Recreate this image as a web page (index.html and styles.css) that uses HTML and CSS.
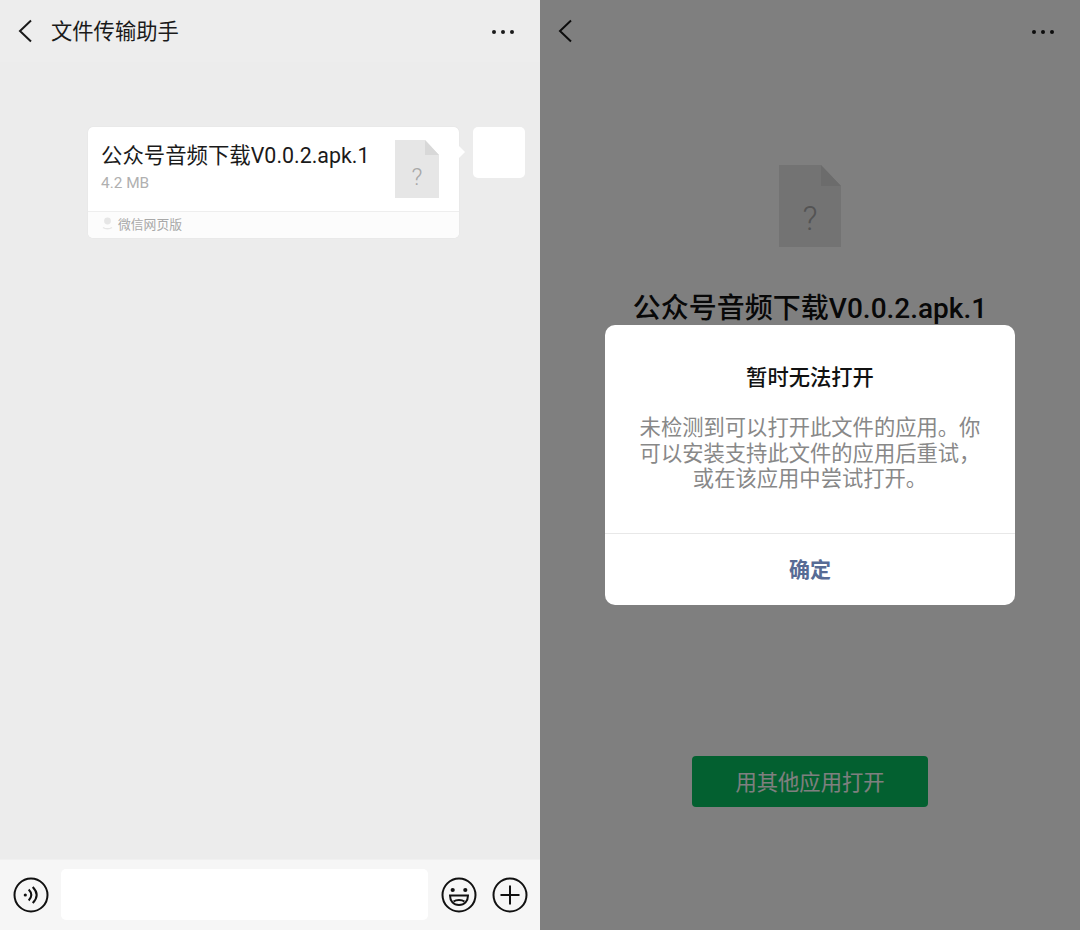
FILE: index.html
```html
<!DOCTYPE html>
<html lang="zh-CN">
  <head>
    <meta charset="UTF-8" />
    <title>文件传输助手</title>
    <link rel="stylesheet" href="styles.css">
  </head>
  <body>
    <div class="screens">
      <!-- Chat screen -->
      <section class="screen chat-screen">
        <header class="top-bar">
          <svg class="back-icon" width="14" height="24" viewBox="0 0 14 24"><path d="M13 1.5 2 12l11 10.5" /></svg>
          <h1 class="chat-title">文件传输助手</h1>
          <svg class="more-icon" width="24" height="6" viewBox="0 0 24 6"><circle cx="3" cy="3" r="2" /><circle cx="12" cy="3" r="2" /><circle cx="21" cy="3" r="2" /></svg>
        </header>

        <main class="messages">
          <div class="bubble">
            <div class="bubble-body">
              <div class="bubble-text">
                <div class="file-name">公众号音频下载V0.0.2.apk.1</div>
                <div class="file-size">4.2 MB</div>
              </div>
              <div class="file-icon file-icon-small"><span>?</span></div>
            </div>
            <div class="bubble-footer">
              <svg width="11" height="13" viewBox="0 0 11 13"><circle cx="5.5" cy="4" r="3.4" fill="#e6e6e6" /><path d="M1 10.5c2.5 1.8 6.5 1.8 9 0" fill="none" stroke="#e6e6e6" stroke-width="1.5" /></svg>
              <span>微信网页版</span>
            </div>
          </div>
          <div class="avatar"></div>
        </main>

        <footer class="input-bar">
          <svg class="round-icon" width="36" height="36" viewBox="0 0 36 36">
            <circle cx="18" cy="18" r="16.5" />
            <circle cx="12.3" cy="18" r="1.6" class="solid" />
            <path d="M15.7 12.5q5.2 5.5 0 11" />
            <path d="M19.7 10q8 8 0 16" />
          </svg>
          <div class="text-box"></div>
          <svg class="round-icon" width="36" height="36" viewBox="0 0 36 36">
            <circle cx="18" cy="18" r="16.5" />
            <circle cx="11.7" cy="13" r="2.1" class="solid" />
            <circle cx="24.3" cy="13" r="2.1" class="solid" />
            <path d="M9 18.500h18c0 5.500-3.500 9.500-9 9.500s-9-4-9-9.500z" />
            <path d="M12.500 24.500c3-2 8-2 11 0" />
          </svg>
          <svg class="round-icon" width="36" height="36" viewBox="0 0 36 36">
            <circle cx="18" cy="18" r="16.5" />
            <path d="M18 8.500v19M8.500 18h19" />
          </svg>
        </footer>
      </section>

      <!-- File screen with dialog on top -->
      <section class="screen file-screen">
        <header class="top-bar">
          <svg class="back-icon" width="14" height="24" viewBox="0 0 14 24"><path d="M13 1.5 2 12l11 10.5" /></svg>
          <svg class="more-icon" width="24" height="6" viewBox="0 0 24 6"><circle cx="3" cy="3" r="2" /><circle cx="12" cy="3" r="2" /><circle cx="21" cy="3" r="2" /></svg>
        </header>

        <div class="file-preview">
          <div class="file-icon file-icon-large"><span>?</span></div>
          <h2 class="preview-name">公众号音频下载V0.0.2.apk.1</h2>
          <button class="open-button" type="button">用其他应用打开</button>
        </div>

        <div class="overlay">
          <div class="dialog">
            <div class="dialog-content">
              <h3 class="dialog-title">暂时无法打开</h3>
              <p class="dialog-text">未检测到可以打开此文件的应用。你可以安装支持此文件的应用后重试，或在该应用中尝试打开。</p>
            </div>
            <button class="dialog-button" type="button">确定</button>
          </div>
        </div>
      </section>
    </div>
  </body>
</html>
```

FILE: styles.css
```css
* {
  box-sizing: border-box;
}

body {
  margin: 0;
  font-family: Roboto, "Noto Sans CJK SC", sans-serif;
  color: #1a1a1a;
}

h1,
h2,
h3,
p {
  margin: 0;
}

.screens {
  display: flex;
  width: 1080px;
  height: 930px;
  overflow: hidden;
}

.screen {
  position: relative;
  display: flex;
  flex-direction: column;
  width: 540px;
  height: 930px;
}

/* Top bar */
.top-bar {
  display: flex;
  align-items: center;
  flex: none;
  height: 62px;
  padding: 0 25px 0 18px;
}

.back-icon {
  flex: none;
  fill: none;
  stroke: #1a1a1a;
  stroke-width: 2;
}

.more-icon {
  flex: none;
  margin-left: auto;
  margin-top: 2px;
  fill: #1a1a1a;
}

.chat-title {
  margin: 2px 0 0 19px;
  font-size: 21.3px;
  font-weight: 400;
  line-height: 30px;
}

/* Chat */
.chat-screen {
  background-color: #ececec;
}

.chat-screen .top-bar {
  background-color: #ededed;
}

.messages {
  display: flex;
  justify-content: flex-end;
  align-items: flex-start;
  flex: 1;
  gap: 14px;
  padding: 65px 15px 0 0;
}

.bubble {
  position: relative;
  width: 371px;
  height: 111px;
  background-color: #fff;
  border-radius: 5px;
  box-shadow: 0 0 1px rgba(0, 0, 0, 0.12);
}

.bubble::after {
  content: "";
  position: absolute;
  top: 19px;
  right: -6px;
  border-top: 6px solid transparent;
  border-bottom: 6px solid transparent;
  border-left: 6px solid #fff;
}

.bubble-body {
  display: flex;
  justify-content: space-between;
  height: 84px;
  padding: 13px 20px 0 13px;
}

.file-name {
  padding-top: 1px;
  font-size: 21.4px;
  line-height: 30px;
}

.file-size {
  margin-top: 2px;
  font-size: 15.4px;
  line-height: 20px;
  color: #b0b0b0;
}

.bubble-footer {
  display: flex;
  align-items: center;
  gap: 5px;
  height: 27px;
  padding: 0 0 3px 14px;
  font-size: 12.8px;
  color: #a8a8a8;
  background-color: #fcfcfc;
  border-top: 1px solid #eee;
  border-radius: 0 0 5px 5px;
}

.avatar {
  width: 52px;
  height: 51px;
  background-color: #fff;
  border-radius: 5px;
}

.input-bar {
  display: flex;
  align-items: center;
  flex: none;
  height: 71px;
  padding: 0 13px;
  background-color: #f6f6f6;
  border-top: 1px solid #f0f0f0;
}

.text-box {
  flex: none;
  width: 367px;
  height: 51px;
  margin: 0 13px 2px 12px;
  background-color: #fff;
  border-radius: 5px;
}

.round-icon {
  flex: none;
  fill: none;
  stroke: #111;
  stroke-width: 2;
}

.round-icon + .round-icon {
  margin-left: 15px;
}

.round-icon .solid {
  fill: #111;
  stroke: none;
}

/* File icon */
.file-icon {
  position: relative;
  display: flex;
  align-items: flex-end;
  justify-content: center;
  flex: none;
  background-color: #e6e6e6;
  color: #a8a8a8;
  font-weight: 300;
  clip-path: polygon(0 0, calc(100% - var(--fold-w)) 0, 100% var(--fold-h), 100% 100%, 0 100%);
}

/* folded corner */
.file-icon::after {
  content: "";
  position: absolute;
  top: 0;
  right: 0;
  width: var(--fold-w);
  height: var(--fold-h);
  background-color: #d8d8d8;
}

.file-icon-small {
  --fold-w: 14px;
  --fold-h: 15px;
  width: 44px;
  height: 58px;
  font-size: 24px;
  line-height: 41px;
}

.file-icon-large {
  --fold-w: 20px;
  --fold-h: 21px;
  width: 62px;
  height: 82px;
  margin-top: 103px;
  font-size: 33px;
  line-height: 57px;
}

/* File preview */
.file-screen {
  background-color: #fff;
}

.file-preview {
  display: flex;
  flex-direction: column;
  align-items: center;
  flex: 1;
}

.preview-name {
  margin-top: 43px;
  font-size: 28px;
  font-weight: 500;
  line-height: 38px;
  color: #111;
}

.open-button {
  width: 236px;
  height: 51px;
  margin-top: 428px;
  padding: 0 0 3px;
  font-family: inherit;
  font-size: 21.3px;
  color: #fff;
  background-color: #07c160;
  border: none;
  border-radius: 4px;
}

/* Dialog */
.overlay {
  position: absolute;
  top: 0;
  right: 0;
  bottom: 0;
  left: 0;
  display: flex;
  align-items: center;
  justify-content: center;
  background-color: rgba(0, 0, 0, 0.5);
}

.dialog {
  width: 410px;
  height: 280px;
  background-color: #fff;
  border-radius: 10px;
}

.dialog-content {
  height: 209px;
  padding: 38px 30px 0;
  text-align: center;
  border-bottom: 1px solid #e8e8e8;
}

.dialog-title {
  font-size: 21.3px;
  font-weight: 500;
  line-height: 30px;
  color: #111;
}

.dialog-text {
  margin-top: 22px;
  font-size: 21.3px;
  line-height: 25.7px;
  color: #888;
}

.dialog-button {
  display: block;
  width: 100%;
  height: 71px;
  padding: 0 0 3px;
  font-family: inherit;
  font-size: 21px;
  font-weight: 700;
  color: #576b95;
  background: none;
  border: none;
}
```
